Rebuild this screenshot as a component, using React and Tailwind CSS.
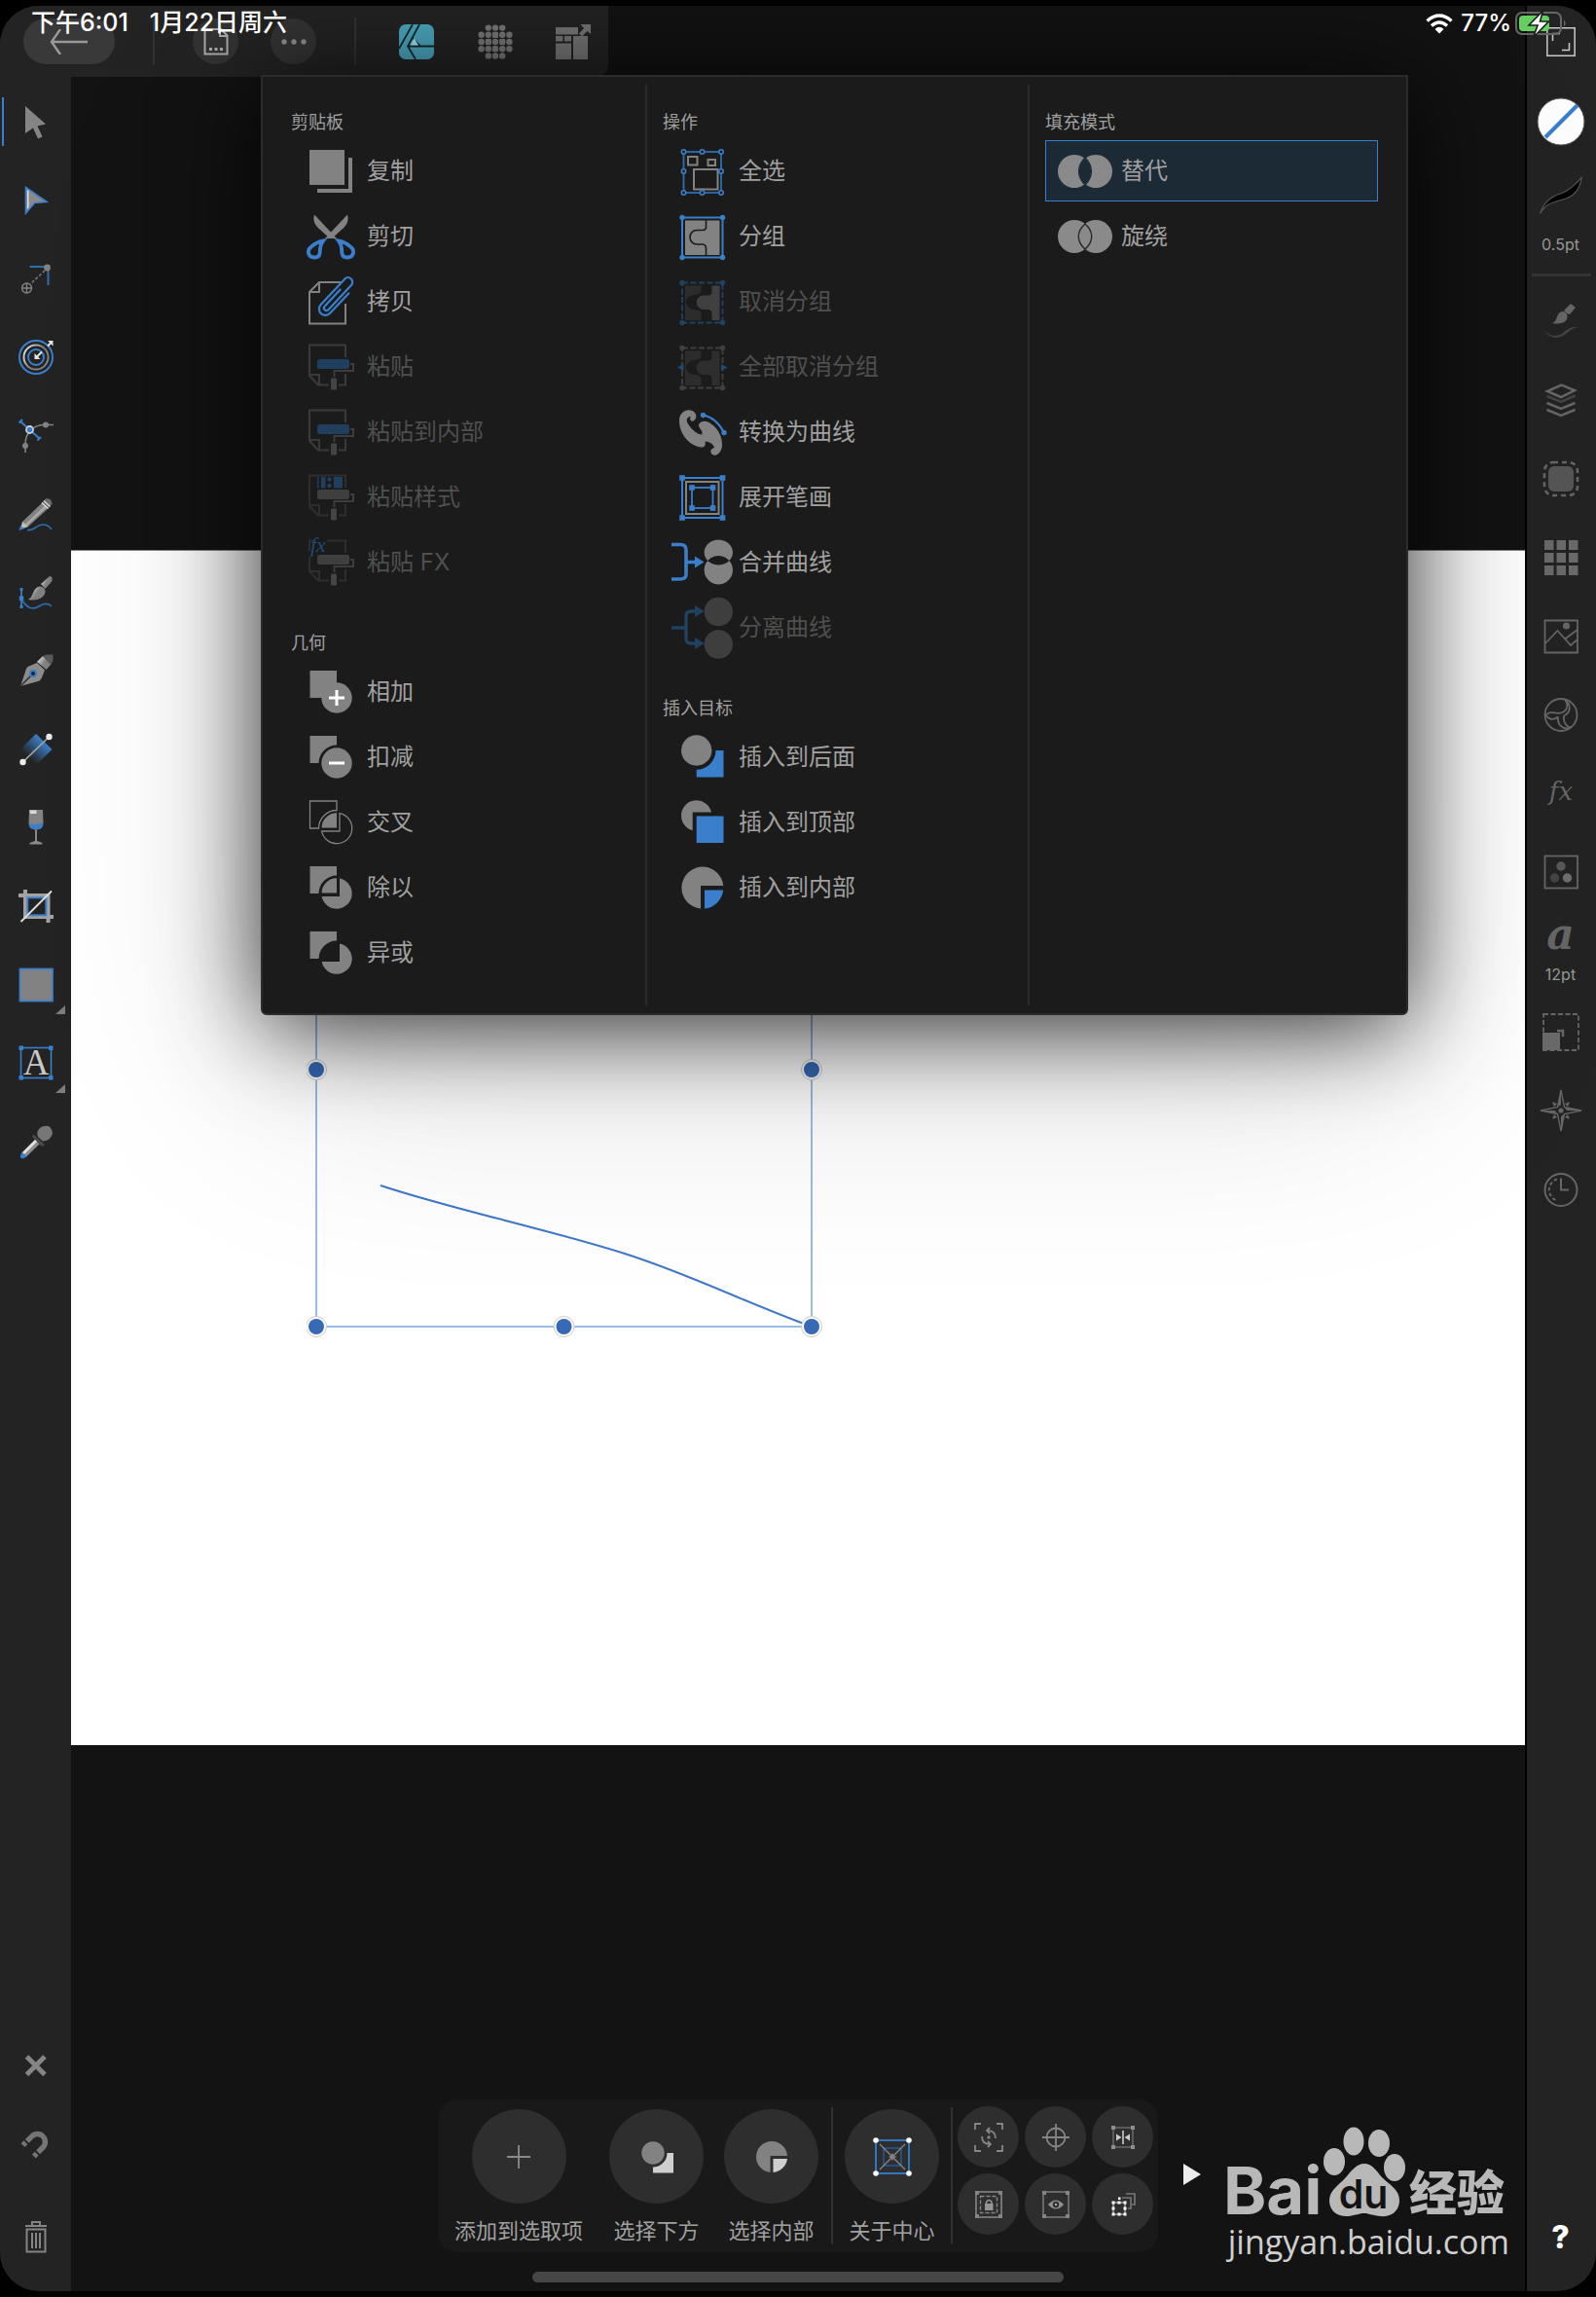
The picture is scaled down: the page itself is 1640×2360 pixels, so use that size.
import { useState } from "react";

const GREY = "#828282";
const BLUE = "#3a7fcb";
const PANEL = "#1b1b1b";

/* ---------- menu icons, 56x48 ---------- */

function MenuSvg({ children }) {
  return (
    <svg width="56" height="48" viewBox="0 0 56 48" fill="none" className="shrink-0 overflow-visible" aria-hidden="true">
      {children}
    </svg>
  );
}

const DuplicateIcon = () => (
  <MenuSvg>
    <path d="M6 2h36v36H6zM46 10h4v36H14v-4h32z" fill={GREY} />
  </MenuSvg>
);

const CutIcon = () => (
  <MenuSvg>
    <path d="M45 1.500C47 8 44 13 39 17L29 26h-7L45 1.500z" fill={GREY} />
    <path d="M11 1.500C9 8 12 13 17 17L27 26h7L11 1.500z" fill={GREY} />
    <path d="M20 28.500C16 29 12 31 8.500 34C2.500 38 4.500 45.500 11 45.500C18 45.500 16.500 40 17 36C17.500 32.500 18 31 20 28.500z" stroke={BLUE} strokeWidth="3.800" />
    <path d="M36 28.500C40 29 44 31 47.500 34C53.500 38 51.500 45.500 45 45.500C38 45.500 39.500 40 39 36C38.500 32.500 38 31 36 28.500z" stroke={BLUE} strokeWidth="3.800" />
  </MenuSvg>
);

const CopyIcon = () => (
  <MenuSvg>
    <path d="M38 4H16L6 14V46.500H43V26M16 4V14H6" stroke={GREY} strokeWidth="2" />
    <g transform="translate(34 19) rotate(-47)">
      <path
        d="M11 6.500H-17A6.500 6.500 0 0 1 -17 -6.500H19A4.600 4.600 0 0 1 19 2.700H-15.500A2.600 2.600 0 0 1 -15.500 -2.500H8"
        stroke={BLUE}
        strokeWidth="2.200"
        strokeLinecap="round"
      />
    </g>
  </MenuSvg>
);

function PasteShape({ roller, page = "#3a3a3a", topGap = false }) {
  return (
    <>
      <path
        d={
          topGap
            ? "M24 1.500H43V14M6 18V33L15 42.500H26M36 42.500H43V31M6 33H16V42M6 12V1.500H10"
            : "M43 14V1.500H6V33L15 42.500H26M36 42.500H43V31M6 32H16V42"
        }
        stroke={page}
        strokeWidth="2"
      />
      <path d="M48 21H51V28H31.500V34" stroke="#3d3d3d" strokeWidth="2" />
      <rect x="14" y="16" width="33" height="10" rx="2.500" fill={roller} />
      <rect x="28" y="35.500" width="6" height="12" rx="1" fill="#444" />
    </>
  );
}

const PasteIcon = () => (
  <MenuSvg>
    <PasteShape roller="#1f3f5c" />
  </MenuSvg>
);

const PasteStyleIcon = () => (
  <MenuSvg>
    <PasteShape roller="#3f3f3f" page="#2e2e2e" />
    <path d="M14 3h1.500v11.500H14zM18 3h4.500v11.500H18zM31 3h9v11.500h-9z" fill="#1f3f5c" />
    <circle cx="26.500" cy="5.500" r="2.200" fill="#1f3f5c" />
    <circle cx="26.500" cy="12" r="2.200" fill="#1f3f5c" />
  </MenuSvg>
);

const PasteFxIcon = () => (
  <MenuSvg>
    <PasteShape roller="#3f3f3f" page="#2e2e2e" topGap />
    <text x="7" y="13" fontSize="22" fontStyle="italic" fontFamily="'Liberation Serif', serif" fill="#1f4a72">
      fx
    </text>
  </MenuSvg>
);

const SQUARE_CUT = "M6.500 2H34V11.500A18.500 18.500 0 0 0 15.500 30H6.500z";
const LENS = "M18.500 29.500A15.500 15.500 0 0 1 34 14.300V29.500z";
const CIRCLE_CUT = "M37 14.600A15.700 15.700 0 1 1 18.600 33H37z";

const AddIcon = () => (
  <MenuSvg>
    <path d="M6.500 2H34V30H6.500z" fill={GREY} />
    <circle cx="34" cy="30" r="15.700" fill={GREY} />
    <path d="M26 30H42M34 22V38" stroke="#fff" strokeWidth="3" />
  </MenuSvg>
);
const SubtractIcon = () => (
  <MenuSvg>
    <path d={SQUARE_CUT} fill={GREY} />
    <circle cx="34" cy="30" r="15.700" fill={GREY} />
    <path d="M26 30H42" stroke="#fff" strokeWidth="3" />
  </MenuSvg>
);
const IntersectIcon = () => (
  <MenuSvg>
    <path d={SQUARE_CUT} stroke={GREY} strokeWidth="1.300" />
    <path d={LENS} fill={GREY} />
    <path d={CIRCLE_CUT} stroke={GREY} strokeWidth="1.300" />
  </MenuSvg>
);
const DivideIcon = () => (
  <MenuSvg>
    <path d={SQUARE_CUT} fill={GREY} />
    <path d={LENS} fill={GREY} />
    <path d={CIRCLE_CUT} fill={GREY} />
  </MenuSvg>
);
const XorIcon = () => (
  <MenuSvg>
    <path d={SQUARE_CUT} fill={GREY} />
    <path d={CIRCLE_CUT} fill={GREY} />
  </MenuSvg>
);

const SelectAllIcon = () => (
  <MenuSvg>
    <rect x="8.500" y="4" width="38.500" height="42" stroke="#2f6db0" strokeWidth="1.800" />
    <g stroke={GREY} strokeWidth="2">
      <rect x="13" y="9" width="9.500" height="8.500" />
      <rect x="33.500" y="12" width="7.500" height="6" />
      <rect x="19" y="22" width="24.500" height="20.500" />
    </g>
    <g stroke={BLUE} strokeWidth="1.600" fill={PANEL}>
      {[[8.5, 4], [27.5, 4], [47, 4], [8.5, 24], [47, 24], [8.5, 46], [27.5, 46], [47, 46]].map(([x, y]) => (
        <circle key={`${x}-${y}`} cx={x} cy={y} r="2.200" />
      ))}
    </g>
  </MenuSvg>
);

const GROUP_CORNERS = [[7, 4.5], [48.5, 4.5], [7, 45.5], [48.5, 45.5]];
const LEFT_PIECE = "M10 7.500H26.500V13Q26 16.500 20 17A9 7.500 0 0 0 20 32Q26 32.500 26.500 36V43H10z";
const RIGHT_PIECE = "M45.500 7.500H37.500V14Q37 17.500 34 17.500H29A7.200 7.200 0 0 0 29 32H34Q37 32.500 37.500 36V43H45.500z";

const GroupIcon = () => (
  <MenuSvg>
    <rect x="7" y="4.500" width="41.500" height="41" stroke={BLUE} strokeWidth="2" />
    <rect x="10" y="7.500" width="35.500" height="35.500" fill={GREY} />
    <path d="M31.500 7V14Q31.500 17.500 28 17.500H22A7 7.200 0 0 0 22 32H28Q31.500 32.500 31.500 36V43.500" stroke={PANEL} strokeWidth="1.600" />
    {GROUP_CORNERS.map(([x, y]) => (
      <circle key={`${x}-${y}`} cx={x} cy={y} r="2.700" fill={BLUE} />
    ))}
  </MenuSvg>
);
const UngroupIcon = () => (
  <MenuSvg>
    <rect x="7" y="4.500" width="41.500" height="41" stroke="#1f4263" strokeWidth="1.800" strokeDasharray="6 2.500" />
    <path d={LEFT_PIECE} fill="#2c2c2c" />
    <path d={RIGHT_PIECE} fill="#404040" />
    {GROUP_CORNERS.map(([x, y]) => (
      <circle key={`${x}-${y}`} cx={x} cy={y} r="2.700" fill="#1f4263" />
    ))}
  </MenuSvg>
);
const UngroupAllIcon = () => (
  <MenuSvg>
    <rect x="7" y="4.500" width="41.500" height="41" stroke="#404040" strokeWidth="1.800" strokeDasharray="6 2.500" />
    <path d={LEFT_PIECE} fill="#2c2c2c" />
    <path d={RIGHT_PIECE} fill="#2e2e2e" />
    {GROUP_CORNERS.map(([x, y]) => (
      <circle key={`${x}-${y}`} cx={x} cy={y} r="2.700" fill="#404040" />
    ))}
    <path d="M2 24.500L8.500 21V28zM53.500 24.500L47 21V28z" fill="#1f4a72" />
  </MenuSvg>
);

const ToCurvesIcon = () => (
  <MenuSvg>
    <path
      d="M4 12C4 4 11 -.5 17.500 2C22.500 4.500 22.500 10.500 18.500 12.500C15.500 13.500 14.500 11 15.500 8C11.500 8 11 12 13 15.500C17 22 23 26.500 27.500 26.500C28.500 22 23.500 20 24 16C27 11.500 32 12 36 15C43.500 20 48.500 28 48 38C47.500 45 42 49.500 38 47C35 44 36.500 41 40 40C39.500 36.500 35 33.500 30.500 33.500C31.500 37 30.500 40 26 39.500C13 37 4 25 4 12z"
      fill={GREY}
    />
    <path d="M28.500 6.500Q42 9 50 24.500" stroke={BLUE} strokeWidth="2" />
    <circle cx="28.500" cy="6.500" r="2.700" fill={BLUE} />
    <circle cx="50" cy="24.500" r="2.700" fill={BLUE} />
  </MenuSvg>
);

const ExpandStrokeIcon = () => (
  <MenuSvg>
    <rect x="7" y="4" width="41.500" height="41" stroke={BLUE} strokeWidth="2" />
    <rect x="11" y="8" width="33.500" height="33" stroke={GREY} strokeWidth="2" />
    <rect x="17" y="14" width="21.500" height="21" stroke={BLUE} strokeWidth="1.800" />
    {[[7, 4], [48.5, 4], [7, 45], [48.5, 45], [17, 14], [38.5, 14], [17, 35], [38.5, 35]].map(([x, y]) => (
      <rect key={`${x}-${y}`} x={x - 2.8} y={y - 2.8} width="5.600" height="5.600" fill={BLUE} />
    ))}
  </MenuSvg>
);

const MergeCurvesIcon = () => (
  <MenuSvg>
    <path d="M-4 5.500H5Q11 5.500 11 11V36Q11 41 5 41H-4M11 23.500H21" stroke={BLUE} strokeWidth="3.600" />
    <path d="M20 17.500L29.500 23.500L20 29.500z" fill={BLUE} />
    <path
      d="M44.300 .5a14.700 13 0 1 0 .01 0zM44.300 17a14.700 14.700 0 1 0 .01 0z"
      fillRule="evenodd"
      fill={GREY}
    />
  </MenuSvg>
);
const SeparateCurvesIcon = () => (
  <MenuSvg>
    <path d="M-4 24H11M21 7H16Q11 7 11 12V35Q11 40 16 40H21" stroke="#1f4263" strokeWidth="3.400" />
    <path d="M20 1L29.500 7L20 13zM20 34L29.500 40L20 46z" fill="#1f4263" />
    <circle cx="44.300" cy="7.500" r="14.700" fill="#3e3e3e" />
    <circle cx="44.300" cy="41" r="14.700" fill="#3e3e3e" />
  </MenuSvg>
);

const InsertBehindIcon = () => (
  <MenuSvg>
    <circle cx="21.700" cy="17" r="15.700" fill={GREY} />
    <path d="M41.500 17H49.500V44.500H21.700V36.700A19.800 19.800 0 0 0 41.500 17z" fill={BLUE} />
  </MenuSvg>
);
const InsertTopIcon = () => (
  <MenuSvg>
    <path d="M17.700 32.200A15.700 15.700 0 1 1 37 13.500H17.700z" fill={GREY} />
    <path d="M21.700 17.500H49.500V45H21.700z" fill={BLUE} />
  </MenuSvg>
);
const InsertInsideIcon = () => (
  <MenuSvg>
    <path d="M26 45.500A21.500 21.500 0 1 1 49.300 22H26z" fill={GREY} />
    <path d="M30 26.500H49.200A21.500 21.500 0 0 1 30 45.500z" fill={BLUE} />
  </MenuSvg>
);

const AlternateIcon = () => (
  <MenuSvg>
    <path d="M17 7a17 17 0 1 0 .01 0zM39 7a17 17 0 1 0 .01 0z" fillRule="evenodd" fill="#8a8a8a" />
    <path d="M28 10C19.500 19 19.500 29 28 38C36.500 29 36.500 19 28 10z" stroke="#1c2a36" strokeWidth="1.500" />
  </MenuSvg>
);
const WindingIcon = () => (
  <MenuSvg>
    <circle cx="17" cy="24" r="17" fill="#8a8a8a" />
    <circle cx="39" cy="24" r="17" fill="#8a8a8a" />
    <path d="M28 11C19 19 19 29 28 37C37 29 37 19 28 11z" stroke="#2c2c2c" strokeWidth="1.500" />
  </MenuSvg>
);

const MENU = [
  [
    {
      title: "剪贴板",
      items: [
        { label: "复制", icon: DuplicateIcon },
        { label: "剪切", icon: CutIcon },
        { label: "拷贝", icon: CopyIcon },
        { label: "粘贴", icon: PasteIcon, disabled: true },
        { label: "粘贴到内部", icon: PasteIcon, disabled: true },
        { label: "粘贴样式", icon: PasteStyleIcon, disabled: true },
        { label: "粘贴 FX", icon: PasteFxIcon, disabled: true },
      ],
    },
    {
      title: "几何",
      items: [
        { label: "相加", icon: AddIcon },
        { label: "扣减", icon: SubtractIcon },
        { label: "交叉", icon: IntersectIcon },
        { label: "除以", icon: DivideIcon },
        { label: "异或", icon: XorIcon },
      ],
    },
  ],
  [
    {
      title: "操作",
      items: [
        { label: "全选", icon: SelectAllIcon },
        { label: "分组", icon: GroupIcon },
        { label: "取消分组", icon: UngroupIcon, disabled: true },
        { label: "全部取消分组", icon: UngroupAllIcon, disabled: true },
        { label: "转换为曲线", icon: ToCurvesIcon },
        { label: "展开笔画", icon: ExpandStrokeIcon },
        { label: "合并曲线", icon: MergeCurvesIcon },
        { label: "分离曲线", icon: SeparateCurvesIcon, disabled: true },
      ],
    },
    {
      title: "插入目标",
      items: [
        { label: "插入到后面", icon: InsertBehindIcon },
        { label: "插入到顶部", icon: InsertTopIcon },
        { label: "插入到内部", icon: InsertInsideIcon },
      ],
    },
  ],
  [
    {
      title: "填充模式",
      items: [
        { label: "替代", icon: AlternateIcon, mode: true },
        { label: "旋绕", icon: WindingIcon, mode: true },
      ],
    },
  ],
];

function MenuItem({ item, selected, onClick }) {
  const Icon = item.icon;
  return (
    <button
      type="button"
      disabled={item.disabled}
      onClick={onClick}
      className={`mb-1 flex h-[63px] w-full items-center gap-[9px] border pl-3 text-left text-2xl ${
        selected ? "border-[#3a7fcb] bg-[#1c2a36]" : "border-transparent"
      } ${item.disabled ? "text-[#4f4f4f]" : "text-[#a0a0a0]"}`}
    >
      <Icon />
      {item.label}
    </button>
  );
}

function EditMenu() {
  const [fillMode, setFillMode] = useState("替代");
  return (
    <div className="absolute top-[71px] right-[193px] left-[268px] z-20 grid grid-cols-[395fr_393fr_387fr] rounded-b-md border-2 border-[#2b2b2b] bg-[#1b1b1b] py-2 shadow-[0_60px_240px_rgba(0,0,0,0.14),0_12px_100px_rgba(0,0,0,0.8)]">
      {MENU.map((column, i) => (
        <div
          key={i}
          className={`min-h-[946px] pt-[26px] ${i === 0 ? "pl-[29px]" : "pl-4"} ${
            i === 2 ? "pr-[29px]" : "border-r-2 border-[#2b2b2b] pr-4"
          }`}
        >
          {column.map((group) => (
            <section key={group.title} className="mb-[39px] last:mb-0">
              <h2 className="mb-[6px] text-lg leading-[25px] text-[#a0a0a0]">{group.title}</h2>
              {group.items.map((item) => (
                <MenuItem
                  key={item.label}
                  item={item}
                  selected={item.mode && item.label === fillMode}
                  onClick={() => item.mode && setFillMode(item.label)}
                />
              ))}
            </section>
          ))}
        </div>
      ))}
    </div>
  );
}

/* ---------- side bar icons, 36x36 ---------- */

function ToolSvg({ children, size = 36 }) {
  return (
    <svg width={size} height={size} viewBox="0 0 36 36" fill="none" className="overflow-visible" aria-hidden="true">
      {children}
    </svg>
  );
}

const WAVE = "M9 34.500C15 36 19 29 25 29C30 29 32 31 34 34";

const TOOLS = [
  {
    name: "移动",
    art: <path d="M7 2L28 20.500L19.500 22.500L24.500 33.500L20 35.500L15 24.500L7 30z" fill="#858585" />,
  },
  {
    name: "节点",
    art: (
      <>
        <path d="M7.500 4.500L29 19.500L16.500 20.500L7.500 31z" fill="#8a8a8a" stroke={BLUE} strokeWidth="1.600" />
        <path d="M9 7L10.500 8V25L9 27z" fill="#e0e0e0" />
      </>
    ),
  },
  {
    name: "点变换",
    art: (
      <>
        <path d="M11.500 6H30.500V25" stroke="#2f6db0" strokeWidth="2" />
        <path d="M27 10L12 24" stroke={GREY} strokeWidth="1.400" strokeDasharray="3 2" />
        <circle cx="29.500" cy="7" r="3.400" fill={GREY} />
        <circle cx="8.500" cy="28" r="5" stroke={GREY} strokeWidth="1.400" />
        <path d="M3.500 28H13.500M8.500 23V33" stroke={GREY} strokeWidth="1.400" />
      </>
    ),
  },
  {
    name: "轮廓",
    art: (
      <>
        <circle cx="18" cy="18" r="17" stroke={BLUE} strokeWidth="2" />
        <circle cx="18" cy="18" r="12.500" stroke="url(#silver)" strokeWidth="2" />
        <circle cx="18" cy="18" r="8" stroke={BLUE} strokeWidth="2" />
        <path d="M24 12.500L18 18.500M30 6.500L33.500 3" stroke="#e4e4e4" strokeWidth="2" />
        <path d="M16.500 14V20H22.500zM30 1H35.500V6.500z" fill="#e4e4e4" />
      </>
    ),
  },
  {
    name: "角",
    art: (
      <>
        <path d="M36 6.500H27C15 6.500 7 14 7 27V35" stroke={GREY} strokeWidth="1.600" />
        <path d="M2 3L21.500 20.500M.5 4.500L4 1M19.500 22.500L23 19" stroke={BLUE} strokeWidth="2" />
        <circle cx="28" cy="6.500" r="3" fill={GREY} />
        <circle cx="7" cy="28" r="3" fill={GREY} />
        <circle cx="11.500" cy="11.500" r="3.600" fill={BLUE} stroke="#d8d8d8" strokeWidth="1.600" />
      </>
    ),
  },
  {
    name: "铅笔",
    art: (
      <>
        <path d={WAVE} stroke="#2f6db0" strokeWidth="1.700" />
        <path d="M4 26L26 5L32 11L10 31L3 33z" fill={GREY} />
        <path d="M6.500 29L28.500 8L30.500 10L8 31z" fill="#a8a8a8" />
        <path d="M24 6.500L28.500 2Q34.500 2 34.500 8L30.500 12.500z" fill="#6a6a6a" />
        <path d="M24 6.500L30.500 12.500M26 4.500L32.500 10.500" stroke="#dcdcdc" strokeWidth="1.300" />
        <path d="M4 26L10 31L2 34z" fill="#bdbdbd" />
        <path d="M2 30L6 33L.5 35z" fill={BLUE} />
      </>
    ),
  },
  {
    name: "矢量画笔",
    art: (
      <>
        <path d="M3 24C8 34 15 36 21 32C27 28 31 29 34 32" stroke="#2f6db0" strokeWidth="1.700" />
        <path d="M3 14V33" stroke={BLUE} strokeWidth="1.700" />
        <path d="M1.500 13h3v3h-3zM1.500 31h3v3h-3zM.8 21.500h4.500v4.500H.8z" fill={BLUE} />
        <path d="M10 25C15 23 14 16 19 12.500Q23 10 26.500 13.500Q29 18 25 22C20 26 15 26 10 25z" fill="url(#silver)" />
        <path d="M23 9L32 1L34.500 2V6L27.500 14z" fill="url(#silver)" />
      </>
    ),
  },
  {
    name: "钢笔",
    art: (
      <>
        <path d="M2 34L8 16Q9 13.500 12 13L19 10L27 17.500L24 25Q23 28 20 29z" fill="#8c8c8c" />
        <path d="M2 34L14 22" stroke="#333" strokeWidth="1.600" />
        <circle cx="15" cy="21" r="3" stroke={BLUE} strokeWidth="2" fill="#222" />
        <path d="M19 9L25 3L34 11L28.500 17z" fill="url(#silver)" />
        <path d="M25 3L29 1.500H35.500V8L33 12z" fill="#5a5a5a" />
      </>
    ),
  },
  {
    name: "填充",
    art: (
      <>
        <path d="M18 2L34.500 18L18 34L1.500 18z" fill="url(#blueFade)" />
        <path d="M4.500 31L31.500 5" stroke="#a5a5a5" strokeWidth="1.600" />
        <circle cx="4.500" cy="31" r="3.200" fill="#eaeaea" />
        <circle cx="31.500" cy="5" r="3.200" fill="#eaeaea" />
      </>
    ),
  },
  {
    name: "透明度",
    art: (
      <>
        <path d="M11 0H25L25.500 14Q25 20 18 20.500Q11 20 10.500 14z" fill={GREY} />
        <path d="M11.500 .5H18.500V4H12z" fill="#d9d9d9" />
        <path d="M10.500 14Q14 15.500 18 15Q22 13.500 25.500 13.500Q25.500 20 18 20.500Q11 20 10.500 14z" fill={BLUE} />
        <path d="M17 20.500h2V32l5.500 2V35.500h-13V34l5.500-2z" fill="#8b8b8b" />
      </>
    ),
  },
  {
    name: "矢量裁剪",
    art: (
      <>
        <path d="M0 7H30.500V35M7 1V29H36" stroke="#a2a2a2" strokeWidth="4" />
        <rect x="9.300" y="9.300" width="19" height="18" stroke={BLUE} strokeWidth="2" fill="#222" />
        <path d="M2.500 34L34 2.500" stroke="#e0e0e0" strokeWidth="1.800" />
      </>
    ),
  },
  {
    name: "矩形",
    more: true,
    art: <rect x="1.500" y="1.500" width="33.500" height="33" fill={GREY} stroke={BLUE} strokeWidth="1.800" />,
  },
  {
    name: "艺术字",
    more: true,
    art: (
      <>
        <rect x="2.500" y="2.500" width="31" height="31" stroke={BLUE} strokeWidth="1.600" />
        <path d="M.5 .5h4.500v4.500H.5zM31 .5h4.500v4.500H31zM.5 31h4.500v4.500H.5zM31 31h4.500v4.500H31z" fill={BLUE} />
        <text x="18" y="30" textAnchor="middle" fontSize="37" fontFamily="'Liberation Serif', serif" fill="#c8c8c8">
          A
        </text>
      </>
    ),
  },
  {
    name: "颜色选择器",
    art: (
      <>
        <path d="M3 30L18 15L22.500 19.500L7.500 34z" fill="#8c8c8c" />
        <path d="M4 29L18 15L20 17L6 31z" fill="#e3e3e3" />
        <path d="M3.500 28.500L8.500 33.500L4.500 35.500L1.500 34z" fill={BLUE} />
        <path d="M15.500 10.500L27 21L24 23L14 13z" fill="#4a4a4a" />
        <path d="M20 13Q18 9 21 5Q25 1 31 2Q36 6 34.500 11Q32 17 25 17.500z" fill="#777" />
      </>
    ),
  },
];

function LeftBar() {
  return (
    <aside className="flex w-[73px] shrink-0 flex-col bg-[#222322] pt-[6px] pb-4">
      <div className="flex h-[1128px] flex-col">
        {TOOLS.map((tool, i) => (
          <button key={tool.name} type="button" aria-label={tool.name} className="relative flex flex-1 items-center justify-center">
            {i === 0 && <span className="absolute left-[2px] h-[50px] w-[2px] bg-[#3a7fcb]" />}
            <ToolSvg>{tool.art}</ToolSvg>
            {tool.more && (
              <svg width="10" height="9" viewBox="0 0 10 9" className="absolute right-[6px] bottom-[10px]" aria-hidden="true">
                <path d="M10 0V9H0z" fill="#7c7c7c" />
              </svg>
            )}
          </button>
        ))}
      </div>
      <div className="mt-auto flex flex-col">
        <button type="button" aria-label="取消选择" className="flex h-20 items-center justify-center">
          <ToolSvg>
            <path d="M8.500 9L27 27.500M27 9L8.500 27.500" stroke="#858585" strokeWidth="5" />
          </ToolSvg>
        </button>
        <button type="button" aria-label="磁性" className="flex h-20 items-center justify-center">
          <ToolSvg>
            <g transform="rotate(45 18 18)" stroke="#757575" strokeWidth="5.500">
              <path d="M10 23V16A8 8 0 0 1 26 16V23" />
              <path d="M10 25V29M26 25V29" />
            </g>
          </ToolSvg>
        </button>
        <button type="button" aria-label="删除" className="mt-4 flex h-20 items-center justify-center">
          <ToolSvg>
            <path d="M7 7H29M8.500 10.500V33.500H27.500V10.500zM14 7V3H22V7M14 14V30M18 14V30M22 14V30" stroke="#858585" strokeWidth="2" />
          </ToolSvg>
        </button>
      </div>
    </aside>
  );
}

const DIM = "#666";
const STUDIOS = [
  {
    name: "画笔",
    art: (
      <>
        <path d="M9 19C14 18 13 11 17 8Q20 6 23 8.500Q26 12 23.500 16C20 20 14 20 9 19z" fill={DIM} />
        <path d="M21 6L28 -1L33 3L27 10Q24 10 21 6z" fill={DIM} />
        <path d="M0 25Q8 36 19 30Q28 21 37 23Q30 23 22 31Q8 39 0 25z" fill="#444" />
      </>
    ),
  },
  {
    name: "图层",
    art: (
      <>
        <path d="M4 8L18.500 1.500L32 7L18 14z" stroke={DIM} strokeWidth="2.500" />
        <path d="M3.500 13L18 19L32.500 12.500" stroke="#444" strokeWidth="2.500" />
        <path d="M3.500 20L18 26L32.500 20M3.500 27L18 33L32.500 27" stroke={DIM} strokeWidth="2.500" />
      </>
    ),
  },
  {
    name: "颜色",
    art: (
      <>
        <rect x="1" y="0" width="34" height="34" rx="9" stroke={DIM} strokeWidth="2.600" strokeDasharray="5 4" />
        <rect x="5" y="4" width="26" height="26" rx="6" fill="#555" />
      </>
    ),
  },
  {
    name: "色板",
    art: (
      <path
        d="M1 -1h9.500v10H1zM13.500 -1H23v10h-9.500zM26 -1h9.500v10H26zM1 12h9.500v10H1zM13.500 12H23v10h-9.500zM26 12h9.500v10H26zM1 25h9.500v10H1zM13.500 25H23v10h-9.500zM26 25h9.500v10H26z"
        fill="#6a6a6a"
      />
    ),
  },
  {
    name: "素材",
    art: (
      <>
        <path d="M1.500 .5h33.500v33H1.500zM1.500 24.500L14.500 11L28 26L35 20M22 19.500L35 10" stroke={DIM} strokeWidth="1.800" />
        <circle cx="23.500" cy="6" r="3.600" fill={DIM} />
      </>
    ),
  },
  {
    name: "样式",
    art: (
      <g stroke={DIM} strokeWidth="1.800">
        <circle cx="18" cy="16.500" r="16.500" />
        <path d="M2 17C8 11 12 16 18 14.500C25 12 26 6 22 1" />
        <path d="M22 1C29 6 28 14 21 17.500" />
        <path d="M2 17Q9 24 15 18.500" />
        <path d="M15 18.500C14 26 20 33 28 29.500M21 17.500C20 24 24 29 28 29.500" />
      </g>
    ),
  },
  {
    name: "效果",
    art: (
      <text x="18" y="23" textAnchor="middle" fontSize="26" fontStyle="italic" fontFamily="'DejaVu Serif', serif" fill={DIM}>
        fx
      </text>
    ),
  },
  {
    name: "调整",
    art: (
      <>
        <rect x="1.500" y="-.5" width="33.500" height="33" stroke={DIM} strokeWidth="1.800" />
        <circle cx="18" cy="10" r="4.700" fill="#5a5a5a" />
        <circle cx="11.500" cy="22" r="4.700" fill="#444" />
        <circle cx="24.500" cy="22" r="4.700" fill="#6d6d6d" />
      </>
    ),
  },
  {
    name: "文本",
    caption: "12pt",
  },
  {
    name: "变换",
    art: (
      <>
        <rect x="0" y="0" width="36" height="37" stroke={DIM} strokeWidth="1.800" strokeDasharray="5 2.500" />
        <path d="M-1 19h18v18H-1z" fill="#6a6a6a" />
        <path d="M14 17H20V23" stroke={DIM} strokeWidth="2.500" />
      </>
    ),
  },
  {
    name: "导航器",
    art: (
      <>
        <path d="M18 -3L21.500 14.500L39 18L21.500 21.500L18 39L14.500 21.500L-3 18L14.500 14.500z" stroke={DIM} strokeWidth="1.400" />
        <path d="M18 -3V12L14.500 14.500zM39 18H24L21.500 14.500zM18 39V24L21.500 21.500zM-3 18H12L14.500 21.500z" fill={DIM} />
        <path d="M9 9L14 11L11 14zM27 9L22 11L25 14zM9 27L14 25L11 22zM27 27L22 25L25 22z" fill={DIM} />
        <circle cx="18" cy="18" r="2.600" fill={DIM} />
      </>
    ),
  },
  {
    name: "历史记录",
    art: (
      <g stroke={DIM} strokeWidth="2">
        <circle cx="18" cy="18.500" r="16.500" />
        <path d="M18 6.500V18.500H26" />
        <path d="M14 7.500A11.500 11.500 0 0 0 14 29.500" strokeDasharray="3.500 2.500" />
      </g>
    ),
  },
];

function RightBar() {
  return (
    <aside className="flex w-[73px] shrink-0 flex-col items-stretch border-l-2 border-black bg-[#222322] pr-[2px] pb-[15px]">
      <button type="button" aria-label="全屏" className="flex h-[74px] items-center justify-center">
        <ToolSvg size={34}>
          <path d="M3 3H33V33H3zM9 17V9H17M27 19V27H19" stroke="#c9c9c9" strokeWidth="1.600" />
        </ToolSvg>
      </button>
      <button type="button" aria-label="填充颜色" className="flex h-[90px] items-center justify-center">
        <svg width="50" height="50" viewBox="0 0 50 50" aria-hidden="true">
          <circle cx="25" cy="25" r="24" fill="#fdfdfd" stroke="#555" strokeWidth="1" />
          <path d="M9 41L42 8" stroke={BLUE} strokeWidth="4" />
        </svg>
      </button>
      <button type="button" aria-label="描边" className="flex flex-col items-center">
        <span className="flex h-[62px] items-center">
          <svg width="46" height="40" viewBox="0 0 46 40" aria-hidden="true">
            <path d="M1.500 38.500C6 24 16 20 25 17C34 13 38 8 44 1.500C43 12 37 20 28 23C17 27 9 26 1.500 38.500z" fill="#000" stroke="#555" strokeWidth="1.200" />
          </svg>
        </span>
        <span className="text-base leading-[38px] text-[#999]">0.5pt</span>
      </button>
      <hr className="mr-[3px] ml-[5px] mt-[11px] mb-[6px] h-[3px] border-0 bg-[#343434]" />
      {STUDIOS.map((s) => (
        <button key={s.name} type="button" aria-label={s.name} className="flex h-[81px] flex-col items-center justify-center">
          {s.caption ? (
            <>
              <span className="font-['DejaVu_Serif',serif] text-[44px] leading-[24px] font-bold text-[#666] italic">a</span>
              <span className="mt-5 text-base leading-[18px] text-[#999]">{s.caption}</span>
            </>
          ) : (
            <ToolSvg>{s.art}</ToolSvg>
          )}
        </button>
      ))}
      <button type="button" aria-label="帮助" className="mt-auto h-20 text-[32px] font-extrabold text-white">
        ?
      </button>
    </aside>
  );
}

/* ---------- top ---------- */

function StatusBar() {
  return (
    <div className="pointer-events-none absolute inset-x-0 top-0 z-30 flex h-9 items-center pr-[29px] pl-8 text-[25px] font-medium text-white">
      <span>下午6:01</span>
      <span className="ml-[22px]">1月22日周六</span>
      <svg width="28" height="21" viewBox="0 0 28 21" className="ml-auto" fill="none" aria-hidden="true">
        <path d="M1.500 7.500Q14 -3.500 26.500 7.500" stroke="#fff" strokeWidth="3.400" />
        <path d="M6 12.500Q14 5.500 22 12.500" stroke="#fff" strokeWidth="3.400" />
        <path d="M14 20.500L9.500 16Q14 11.500 18.500 16z" fill="#fff" />
      </svg>
      <span className="ml-2 text-2xl">77%</span>
      <svg width="52" height="28" viewBox="0 0 52 28" className="ml-[6px] overflow-visible" fill="none" aria-hidden="true">
        <rect x="-1" y="3" width="46" height="22" rx="6" stroke="#666" strokeWidth="2" />
        <path d="M48 10.500Q51.500 14 48 17.500z" fill="#666" />
        <rect x="2" y="6" width="31" height="16" rx="4" fill="#65cf60" />
        <path d="M26.500 1L12 16H21L16.500 28.500L32.500 12H23.500z" fill="#fff" stroke="#1d1d1d" strokeWidth="1.600" />
      </svg>
    </div>
  );
}

function DotsPersonaIcon() {
  const rows = [
    [2, 3, 4],
    [1, 2, 3, 4, 5],
    [1, 2, 3, 4, 5],
    [1, 2, 3, 4, 5],
    [2, 3, 4],
  ];
  const cells = rows.flatMap((cols, r) => cols.map((c) => [(c - 1) * 7.2 + 3.6, r * 7.2 + 3.6]));
  return (
    <svg width="36" height="36" viewBox="0 0 36 36" aria-hidden="true">
      {cells.map(([x, y]) => (
        <circle key={`${x}-${y}`} cx={x} cy={y} r="3.200" fill="#777" />
      ))}
      <path d="M8 15h5.600v6H8zM22.500 15H28v6h-5.500zM15.200 8h5.600v6h-5.600zM15.200 22.500h5.600V28h-5.600z" fill="#777" />
    </svg>
  );
}

function TopBar() {
  return (
    <header className="flex h-[73px] w-[625px] items-center rounded-br-xl bg-[#232323] pl-6">
      <button type="button" aria-label="返回" className="flex h-[47px] w-[94px] items-center justify-center rounded-full bg-[#393939]">
        <svg width="40" height="26" viewBox="0 0 40 26" fill="none" aria-hidden="true">
          <path d="M11 0L2 13L11 26M2 13H39" stroke="#999" strokeWidth="2.400" />
        </svg>
      </button>
      <span className="ml-[39px] h-[49px] w-[2px] bg-[#333]" />
      <button type="button" aria-label="文档" className="ml-[39px] flex size-[47px] items-center justify-center rounded-full bg-[#333]">
        <svg width="26" height="28" viewBox="0 0 26 28" fill="none" aria-hidden="true">
          <path d="M1.500 1H18L24.500 7.500V26.500H1.500zM17 1V8H24.500" stroke="#aaa" strokeWidth="2" />
          <path d="M6 20h3v3H6zM11.500 20h3v3h-3zM17 20h3v3h-3z" fill="#aaa" />
        </svg>
      </button>
      <button type="button" aria-label="更多" className="ml-[33px] flex size-[47px] items-center justify-center rounded-full bg-[#333]">
        <svg width="28" height="6" viewBox="0 0 28 6" aria-hidden="true">
          <circle cx="4" cy="3" r="2.700" fill="#8d8d8d" />
          <circle cx="14" cy="3" r="2.700" fill="#8d8d8d" />
          <circle cx="24" cy="3" r="2.700" fill="#8d8d8d" />
        </svg>
      </button>
      <span className="ml-[39px] h-[49px] w-[2px] bg-[#333]" />
      <button type="button" aria-label="设计师" className="ml-[44px]">
        <svg width="36" height="36" viewBox="0 0 36 36" fill="none" aria-hidden="true">
          <rect width="36" height="36" rx="7" fill="#4ba7be" />
          <path d="M14 0L0 25M21 0L9 22.500L17 36M9 22.500H36M14 14L22 22.500" stroke="#14282d" strokeWidth="1.800" />
          <path d="M15.500 14L20 21.500H12z" fill="#a3e4ee" />
        </svg>
      </button>
      <button type="button" aria-label="像素" className="ml-[45px]">
        <DotsPersonaIcon />
      </button>
      <button type="button" aria-label="导出" className="ml-[44px]">
        <svg width="36" height="36" viewBox="0 0 36 36" aria-hidden="true">
          <path d="M0 3h23v7.500H0zM0 12h7.500v5.500H0zM9 12h7v5.500H9zM0 19.500h16V36H0zM18 12h15v24H18z" fill="#757575" />
          <path d="M25.500 0H36V10L32.500 7L27 12.500L24 9.500L29 4z" fill="#757575" />
        </svg>
      </button>
    </header>
  );
}

/* ---------- bottom ---------- */

const CONTEXT = [
  {
    label: "添加到选取项",
    wide: true,
    art: <path d="M12 24H36M24 12V36" stroke="#8a8a8a" strokeWidth="1.800" />,
  },
  {
    label: "选择下方",
    art: (
      <>
        <circle cx="20" cy="20" r="11.700" fill={GREY} />
        <path d="M34.500 20H41V40.500H20V34.500A14.500 14.500 0 0 0 34.500 20z" fill="#cfcfcf" />
      </>
    ),
  },
  {
    label: "选择内部",
    art: (
      <>
        <path d="M22.500 40A16 16 0 1 1 40 23H22.500z" fill={GREY} />
        <path d="M25.500 26H40A16 16 0 0 1 25.500 40z" fill="#cfcfcf" />
      </>
    ),
  },
];

function ContextButton({ label, wide, art }) {
  return (
    <button type="button" className={`flex flex-col items-center pt-[10px] ${wide ? "w-[144px]" : "w-[97px]"}`}>
      <span className="flex size-[97px] items-center justify-center rounded-full bg-[#2e2e2e]">
        <svg width="48" height="48" viewBox="0 0 48 48" fill="none" aria-hidden="true">
          {art}
        </svg>
      </span>
      <span className="mt-[14px] text-[22px] leading-7 whitespace-nowrap text-[#a0a0a0]">{label}</span>
    </button>
  );
}

const CORNERS_28 = "M0 0h4v4H0zM24 0h4v4h-4zM0 24h4v4H0zM24 24h4v4h-4z";
const QUICK = [
  {
    name: "旋转画布",
    art: (
      <g stroke="#858585" strokeWidth="1.800">
        <path d="M0 6V0H6M22 0H28V6M28 22V28H22M6 28H0V22" />
        <path d="M13 7Q21 7 21 15M15 21Q7 21 7 13" />
        <path d="M15 4L12 7L15 10M13 18L16 21L13 24" />
        <path d="M12.500 14h3" strokeWidth="3" />
      </g>
    ),
  },
  {
    name: "旋转中心",
    art: (
      <g stroke="#858585" strokeWidth="1.800">
        <circle cx="14" cy="14" r="9.500" />
        <path d="M0 14H28M14 0V28" />
      </g>
    ),
  },
  {
    name: "镜像",
    art: (
      <>
        <rect x="4" y="4" width="20" height="20" stroke="#666" strokeWidth="1.600" />
        <path d="M2 2h4v4H2zM22 2h4v4h-4zM2 22h4v4H2zM22 22h4v4h-4z" fill="#8d8d8d" />
        <path d="M14 7V21" stroke="#ccc" strokeWidth="1.600" />
        <path d="M7 10.500V17.500L12.500 14zM21 10.500V17.500L15.500 14z" fill="#ccc" />
      </>
    ),
  },
  {
    name: "锁定子项",
    art: (
      <>
        <rect x="1" y="1" width="26" height="26" stroke="#858585" strokeWidth="1.600" />
        <rect x="5.500" y="5.500" width="17" height="17" stroke="#858585" strokeWidth="1.400" strokeDasharray="4 2" />
        <path d={CORNERS_28} fill="#858585" />
        <rect x="10" y="13" width="8.500" height="7" fill="#959595" />
        <path d="M11.500 13V11.500Q14.200 7.500 17 11.500V13" stroke="#959595" strokeWidth="1.500" />
      </>
    ),
  },
  {
    name: "预览",
    art: (
      <>
        <rect x="1" y="1" width="26" height="26" stroke="#777" strokeWidth="1.600" />
        <path d={CORNERS_28} fill="#858585" />
        <path d="M6 14Q14 5 22 14Q14 23 6 14z" fill="#909090" />
        <circle cx="14" cy="14" r="3.200" fill="#2e2e2e" />
        <circle cx="14" cy="14" r="1.200" fill="#aaa" />
      </>
    ),
  },
  {
    name: "变换副本",
    art: (
      <>
        <path d="M17 3H26V14H23M13 7H22V18H19" stroke="#777" strokeWidth="1.600" />
        <rect x="4" y="12" width="12" height="12" stroke="#aaa" strokeWidth="1.400" fill="#2e2e2e" />
        <path
          d="M2.500 10.500h3v3h-3zM8.500 10.500h3v3h-3zM14.500 10.500h3v3h-3zM2.500 16.500h3v3h-3zM14.500 16.500h3v3h-3zM2.500 22.500h3v3h-3zM8.500 22.500h3v3h-3zM14.500 22.500h3v3h-3zM9 6.500h2.500v2.500H9z"
          fill="#fff"
        />
      </>
    ),
  },
];

function ContextBar() {
  return (
    <div className="relative flex h-[157px] rounded-[20px] bg-[#191919] pr-[5px] pl-[11px]">
      <div className="flex gap-[21px]">
        {CONTEXT.map((c) => (
          <ContextButton key={c.label} {...c} />
        ))}
      </div>
      <span className="my-2 ml-[13px] w-[2px] bg-[#303030]" />
      <div className="mx-3 flex">
        <ContextButton
          label="关于中心"
          art={
            <>
              <rect x="7" y="7" width="34" height="34" stroke="#2f78c0" strokeWidth="2" />
              <rect x="15" y="15" width="18" height="18" stroke="#234f7c" strokeWidth="2" />
              <path d="M11 11L37 37M37 11L11 37M24 20.500V27.500M20.500 24H27.500" stroke="#858585" strokeWidth="1.400" />
              {[[7, 7], [41, 7], [7, 41], [41, 41]].map(([x, y]) => (
                <circle key={`${x}-${y}`} cx={x} cy={y} r="2.800" fill="#fff" />
              ))}
            </>
          }
        />
      </div>
      <span className="my-2 w-[2px] bg-[#303030]" />
      <div className="ml-[5px] grid grid-cols-3 content-start gap-x-[6px] gap-y-[6px] pt-[7px]">
        {QUICK.map((q) => (
          <button key={q.name} type="button" aria-label={q.name} className="flex size-[63px] items-center justify-center rounded-full bg-[#2e2e2e]">
            <svg width="28" height="28" viewBox="0 0 28 28" fill="none" className="overflow-visible" aria-hidden="true">
              {q.art}
            </svg>
          </button>
        ))}
      </div>
      <svg width="18" height="22" viewBox="0 0 18 22" className="absolute top-[66px] left-full ml-[26px]" aria-hidden="true">
        <path d="M0 0L18 11L0 22z" fill="#ededed" />
      </svg>
    </div>
  );
}

function Watermark() {
  return (
    <div className="pointer-events-none absolute right-[89px] bottom-[28px] flex flex-col items-end">
      <svg width="292" height="98" viewBox="0 0 292 98" className="overflow-visible" aria-hidden="true">
        <g fill="#b8b8b8">
          <text x="-2" y="93" fontSize="67" fontWeight="700" fontFamily="Inter, sans-serif">
            Bai
          </text>
          <ellipse cx="112" cy="39" rx="11" ry="14" />
          <ellipse cx="132" cy="18" rx="10.500" ry="14.500" />
          <ellipse cx="158" cy="20" rx="11" ry="14" />
          <ellipse cx="174" cy="45" rx="11" ry="14" />
          <path d="M143 41C151 41 155 48 161 55C168 62 180 68 179 80C178 92 168 96 159 95C150 94 147 92 143 92C138 92 134 94 127 95C116 96 107 90 107 79C107 68 117 63 124 55C130 48 135 41 143 41z" />
          <text x="189" y="89" fontSize="49" fontWeight="900" fontFamily="'Noto Sans CJK SC', sans-serif">
            经验
          </text>
        </g>
        <text x="142" y="87" textAnchor="middle" fontSize="41" fontWeight="600" fontFamily="Inter, sans-serif" fill="#131313">
          du
        </text>
      </svg>
      <span className="font-['Open_Sans','Noto_Sans',sans-serif] text-[34px] leading-[46px] font-medium text-[#cfcfcf]">jingyan.baidu.com</span>
    </div>
  );
}

function Canvas() {
  return (
    <main className="relative flex flex-1 flex-col items-center">
      <div className="mt-[486px] h-[1228px] w-full border-t border-[#888] bg-white" />
      {/* selected curve and its bounding box */}
      <svg width="530" height="560" viewBox="0 0 530 560" fill="none" className="absolute top-[741px] left-[242px]" aria-hidden="true">
        <rect x="10" y="17" width="509" height="526" stroke="#7ba7da" strokeWidth="1.500" />
        <path d="M76 398C155 424 245 442 327 468C396 490 450 518 519 543" stroke="#3f78c9" strokeWidth="2" />
        {[[10, 279], [519, 279], [10, 543], [264.5, 543], [519, 543]].map(([x, y]) => (
          <g key={`${x}-${y}`}>
            <circle cx={x} cy={y} r="10.500" fill="#fff" stroke="#ccc" strokeWidth="1" />
            <circle cx={x} cy={y} r="8" fill="#3769b5" />
          </g>
        ))}
      </svg>
      <div className="mt-auto pt-10">
        <ContextBar />
      </div>
      <div className="mt-5 mb-[9px] h-[11px] w-[546px] rounded-full bg-[#464646]" />
    </main>
  );
}

export default function App() {
  return (
    <div className="flex min-h-screen flex-col bg-black py-[6px] font-[Inter,'Noto_Sans_CJK_SC',sans-serif]">
      <svg width="0" height="0" className="absolute" aria-hidden="true">
        <defs>
          <linearGradient id="silver" x1="0" y1="0" x2="1" y2="0.6">
            <stop offset="0.1" stopColor="#e0e0e0" />
            <stop offset="0.6" stopColor="#808080" />
          </linearGradient>
          <linearGradient id="blueFade" x1="0.7" y1="0.2" x2="0.2" y2="0.7">
            <stop offset="0" stopColor="#3a7fcb" />
            <stop offset="1" stopColor="#222322" />
          </linearGradient>
        </defs>
      </svg>
      <div className="relative flex flex-1 overflow-hidden rounded-[40px] bg-[#131313]">
        <div className="flex flex-1 flex-col">
          <div className="bg-linear-to-r from-[#222322] from-[73px] to-[#131313] to-[73px]">
            <TopBar />
          </div>
          <div className="flex flex-1">
            <LeftBar />
            <Canvas />
          </div>
        </div>
        <RightBar />
        <EditMenu />
        <StatusBar />
        <Watermark />
      </div>
    </div>
  );
}
